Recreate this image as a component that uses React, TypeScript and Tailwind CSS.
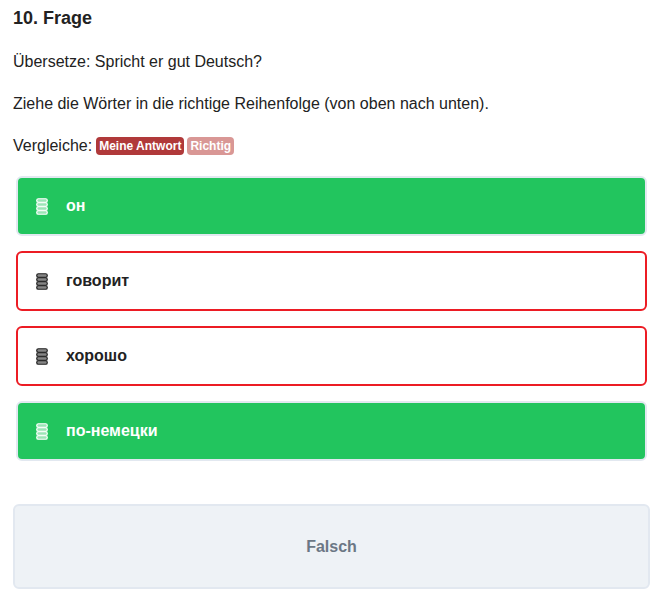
const words = [
    {text: 'он', correct: true},
    {text: 'говорит', correct: false},
    {text: 'хорошо', correct: false},
    {text: 'по-немецки', correct: true},
];

const GripIcon = () => (
    <svg width="12" height="17" viewBox="0 0 12 17" className="shrink-0">
        {[0, 4, 8, 12].map(y => (
            <rect key={y} x="0.75" y={y + 0.75} width="10.5" height="3.5" rx="1.6"
                  fill="currentColor" fillOpacity="0.55" stroke="currentColor" strokeWidth="1.2"/>
        ))}
    </svg>
);

const App = () => {
    return (
        <div className="pl-[13px] pr-[11px] pt-[6px] text-[16px] leading-6 text-[#222]"
             style={{fontFamily: '"Liberation Sans", Arial, sans-serif'}}>
            <h2 className="text-[18px] font-bold leading-6">10. Frage</h2>
            <p className="mt-[20px]">Übersetze: Spricht er gut Deutsch?</p>
            <p className="mt-[18px]">Ziehe die Wörter in die richtige Reihenfolge (von oben nach unten).</p>
            <p className="mt-[18px] flex items-center gap-[3px]">
                <span className="mr-[1px]">Vergleiche:</span>
                <span className="rounded-[4px] bg-[#b0393a] px-[3px] text-[12px] font-bold leading-[18px] text-white">
                    Meine Antwort
                </span>
                <span className="rounded-[4px] bg-[#d99795] px-[3px] text-[12px] font-bold leading-[18px] text-white">
                    Richtig
                </span>
            </p>

            <div className="mx-[3px] mt-[18px] flex flex-col gap-[15px]">
                {words.map(w => (
                    <div key={w.text}
                         className={w.correct
                             ? 'flex h-[60px] items-center gap-[18px] rounded-md border-2 border-[#e2e8f0] bg-[#22c55e] pl-[18px] font-bold text-white'
                             : 'flex h-[60px] items-center gap-[18px] rounded-md border-2 border-[#ec1c24] bg-white pl-[18px] font-bold text-[#222]'}>
                        <GripIcon/>
                        <span>{w.text}</span>
                    </div>
                ))}
            </div>

            <button
                className="mt-[43px] flex h-[85px] w-full items-center justify-center rounded-md border-2 border-[#e2e8f0] bg-[#eef2f6] font-bold text-[#6b7785]">
                Falsch
            </button>
        </div>
    );
};

export default App;
